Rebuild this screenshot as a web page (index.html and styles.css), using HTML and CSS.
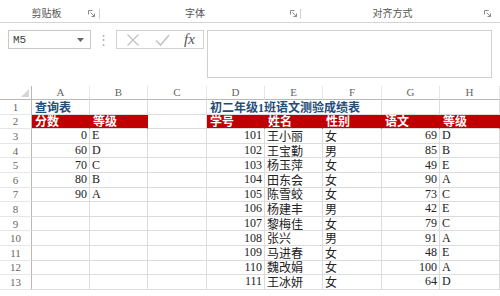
FILE: index.html
```html
<!DOCTYPE html>
<html lang="zh-CN">
<head>
<meta charset="utf-8">
<title>成绩表</title>
<link rel="stylesheet" href="styles.css">
</head>
<body>
<div class="ribbon">
  <div class="group g1"><span class="glabel">剪贴板</span><svg class="launch" width="8" height="8" viewBox="0 0 8 8"><path d="M0.5 4.5V0.5H4.5" fill="none" stroke="#8a8a8a"/><path d="M2.5 2.5L6.5 6.5M6.5 3.5V6.5H3.5" fill="none" stroke="#8a8a8a"/></svg></div>
  <div class="sep"></div>
  <div class="group g2"><span class="glabel">字体</span><svg class="launch" width="8" height="8" viewBox="0 0 8 8"><path d="M0.5 4.5V0.5H4.5" fill="none" stroke="#8a8a8a"/><path d="M2.5 2.5L6.5 6.5M6.5 3.5V6.5H3.5" fill="none" stroke="#8a8a8a"/></svg></div>
  <div class="sep"></div>
  <div class="group g3"><span class="glabel">对齐方式</span><svg class="launch" width="8" height="8" viewBox="0 0 8 8"><path d="M0.5 4.5V0.5H4.5" fill="none" stroke="#8a8a8a"/><path d="M2.5 2.5L6.5 6.5M6.5 3.5V6.5H3.5" fill="none" stroke="#8a8a8a"/></svg></div>
</div>

<div class="fbar">
  <div class="namebox"><span class="ref">M5</span><svg class="drop" width="7" height="4" viewBox="0 0 7 4"><path d="M0 0H7L3.5 4Z" fill="#666"/></svg></div>
  <div class="dots">⋮</div>
  <div class="fxbox">
    <svg width="14" height="14" viewBox="0 0 14 14"><path d="M1.5 1.5L12.5 12.5M12.5 1.5L1.5 12.5" stroke="#c4c4c4" stroke-width="1.4" fill="none"/></svg>
    <svg width="15" height="14" viewBox="0 0 15 14"><path d="M1 7.5L5.5 12L14 2" stroke="#c4c4c4" stroke-width="1.6" fill="none"/></svg>
    <span class="fx">fx</span>
  </div>
  <div class="finput"></div>
</div>

<div class="sheet">
  <div class="corner"><svg width="8" height="8" viewBox="0 0 8 8"><path d="M8 0V8H0Z" fill="#d6d6d6"/></svg></div>
  <div class="ch">A</div><div class="ch">B</div><div class="ch">C</div><div class="ch">D</div><div class="ch">E</div><div class="ch">F</div><div class="ch">G</div><div class="ch">H</div>

  <div class="rh">1</div><div class="c title">查询表</div><div class="c"></div><div class="c"></div><div class="c title span3">初二年级1班语文测验成绩表</div><div class="c"></div><div class="c"></div>

  <div class="rh">2</div><div class="c red">分数</div><div class="c red">等级</div><div class="c"></div><div class="c red">学号</div><div class="c red">姓名</div><div class="c red">性别</div><div class="c red">语文</div><div class="c red">等级</div>

  <div class="rh">3</div><div class="c r">0</div><div class="c">E</div><div class="c"></div><div class="c r">101</div><div class="c">王小丽</div><div class="c">女</div><div class="c r">69</div><div class="c">D</div>
  <div class="rh">4</div><div class="c r">60</div><div class="c">D</div><div class="c"></div><div class="c r">102</div><div class="c">王宝勤</div><div class="c">男</div><div class="c r">85</div><div class="c">B</div>
  <div class="rh">5</div><div class="c r">70</div><div class="c">C</div><div class="c"></div><div class="c r">103</div><div class="c">杨玉萍</div><div class="c">女</div><div class="c r">49</div><div class="c">E</div>
  <div class="rh">6</div><div class="c r">80</div><div class="c">B</div><div class="c"></div><div class="c r">104</div><div class="c">田东会</div><div class="c">女</div><div class="c r">90</div><div class="c">A</div>
  <div class="rh">7</div><div class="c r">90</div><div class="c">A</div><div class="c"></div><div class="c r">105</div><div class="c">陈雪蛟</div><div class="c">女</div><div class="c r">73</div><div class="c">C</div>
  <div class="rh">8</div><div class="c"></div><div class="c"></div><div class="c"></div><div class="c r">106</div><div class="c">杨建丰</div><div class="c">男</div><div class="c r">42</div><div class="c">E</div>
  <div class="rh">9</div><div class="c"></div><div class="c"></div><div class="c"></div><div class="c r">107</div><div class="c">黎梅佳</div><div class="c">女</div><div class="c r">79</div><div class="c">C</div>
  <div class="rh">10</div><div class="c"></div><div class="c"></div><div class="c"></div><div class="c r">108</div><div class="c">张兴</div><div class="c">男</div><div class="c r">91</div><div class="c">A</div>
  <div class="rh">11</div><div class="c"></div><div class="c"></div><div class="c"></div><div class="c r">109</div><div class="c">马进春</div><div class="c">女</div><div class="c r">48</div><div class="c">E</div>
  <div class="rh">12</div><div class="c"></div><div class="c"></div><div class="c"></div><div class="c r">110</div><div class="c">魏改娟</div><div class="c">女</div><div class="c r">100</div><div class="c">A</div>
  <div class="rh">13</div><div class="c"></div><div class="c"></div><div class="c"></div><div class="c r">111</div><div class="c">王冰妍</div><div class="c">女</div><div class="c r">64</div><div class="c">D</div>
</div>
</body>
</html>
```

FILE: styles.css
```css
* { box-sizing: border-box; }

body {
  margin: 0;
  width: 500px;
  height: 296px;
  overflow: hidden;
  background: #fff;
  font-family: "Liberation Serif", "Noto Sans CJK SC", serif;
  color: #222;
}

/* ribbon group labels */
.ribbon {
  height: 23px;
  display: flex;
  align-items: center;
  padding-top: 3px;
  border-bottom: 1px solid #d4d4d4;
}
.group {
  display: flex;
  align-items: center;
  height: 16px;
}
.g1 { width: 99px; padding-left: 5px; padding-right: 3px; }
.g2 { width: 200px; padding-right: 2px; }
.g3 { width: 194px; padding-right: 3px; }
.glabel {
  flex: 1;
  text-align: center;
  font-family: "Noto Sans CJK SC", sans-serif;
  font-size: 10px;
  color: #555;
}
.launch { flex: none; margin-top: 3px; }
.sep {
  width: 1px;
  height: 10px;
  background: #d0d0d0;
  margin-top: 2px;
}

/* formula bar */
.fbar {
  display: flex;
  align-items: flex-start;
  margin-top: 7px;
  height: 48px;
}
.namebox {
  margin-left: 8px;
  width: 83px;
  height: 19px;
  border: 1px solid #c8c8c8;
  display: flex;
  align-items: center;
  padding: 0 6px 0 4px;
}
.ref {
  flex: 1;
  font-family: "Liberation Mono", monospace;
  font-size: 11px;
  color: #444;
}
.drop { flex: none; }
.dots {
  width: 25px;
  height: 19px;
  text-align: center;
  font-size: 13px;
  line-height: 19px;
  color: #b0b0b0;
}
.fxbox {
  width: 88px;
  height: 19px;
  border: 1px solid #d2d2d2;
  display: flex;
  align-items: center;
  gap: 15px;
  padding-left: 9px;
}
.fx {
  font-family: "Liberation Serif", serif;
  font-style: italic;
  font-size: 15px;
  color: #555;
  line-height: 17px;
  margin-left: -1px;
}
.finput {
  margin-left: 3px;
  width: 285px;
  height: 48px;
  border: 1px solid #cfcfcf;
}

/* sheet */
.sheet {
  margin-top: 8px;
  display: grid;
  grid-template-columns: 32px 58px 58px 59px 58px 58px 59px 58px 60px;
  grid-template-rows: 14px repeat(13, 14.6px);
  font-size: 12px;
}
.corner {
  border-right: 1px solid #b8b8b8;
  border-bottom: 1px solid #b8b8b8;
  display: flex;
  justify-content: flex-end;
  align-items: flex-end;
  padding: 0 2px 2px 0;
}
.ch {
  border-bottom: 1px solid #b8b8b8;
  border-right: 1px solid #e6e6e6;
  text-align: center;
  font-size: 11px;
  line-height: 13px;
  color: #666;
}
.rh {
  border-right: 1px solid #b8b8b8;
  border-bottom: 1px solid #e6e6e6;
  display: flex;
  align-items: center;
  justify-content: center;
  font-size: 11px;
  color: #666;
}
.c {
  border-right: 1px solid #dcdcdc;
  border-bottom: 1px solid #dcdcdc;
  display: flex;
  align-items: center;
  padding: 0 2px;
  white-space: nowrap;
  overflow: visible;
}
.r { justify-content: flex-end; }
.title {
  font-weight: bold;
  color: #1f4e79;
  padding-left: 3px;
}
.span3 { grid-column: span 3; }
.red {
  background: #c00000;
  border-right-color: #c00000;
  color: #fff;
  font-weight: bold;
  padding-left: 3px;
}
```
